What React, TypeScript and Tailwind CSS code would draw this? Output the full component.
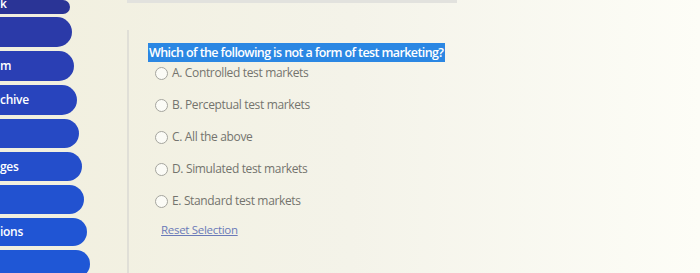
const pills = [
  { label: 'k', w: 'w-[70px]', h: 'h-[14px]', mt: 'mt-0', color: 'bg-[#2a3496]' },
  { label: '', w: 'w-[72px]', h: 'h-[30px]', mt: 'mt-[3px]', color: 'bg-[#2b3aa8]' },
  { label: 'm', w: 'w-[74px]', h: 'h-[30px]', mt: 'mt-[4px]', color: 'bg-[#2a3fb4]' },
  { label: 'chive', w: 'w-[77px]', h: 'h-[30px]', mt: 'mt-[4px]', color: 'bg-[#2844bd]' },
  { label: '', w: 'w-[79px]', h: 'h-[29px]', mt: 'mt-[4px]', color: 'bg-[#2649c4]' },
  { label: 'ges', w: 'w-[82px]', h: 'h-[29px]', mt: 'mt-[4px]', color: 'bg-[#244ecb]' },
  { label: '', w: 'w-[84px]', h: 'h-[29px]', mt: 'mt-[4px]', color: 'bg-[#2252d0]' },
  { label: 'ions', w: 'w-[87px]', h: 'h-[28px]', mt: 'mt-[4px]', color: 'bg-[#2055d4]' },
  { label: '', w: 'w-[90px]', h: 'h-[28px]', mt: 'mt-[4px]', color: 'bg-[#1f57d6]' },
];

const options = [
  'A. Controlled test markets',
  'B. Perceptual test markets',
  'C. All the above',
  'D. Simulated test markets',
  'E. Standard test markets',
];

function Radio() {
  return <span className="w-[13px] h-[13px] rounded-full border border-[#a5a59e] bg-[#fbfbf6] shrink-0" />;
}

export default function App() {
  return (
    <div
      className="w-[700px] h-[273px] overflow-hidden flex bg-gradient-to-r from-[#f1efde] via-[#f4f3e9] to-[#fdfdf7]"
      style={{ fontFamily: '"Open Sans", "Noto Sans", sans-serif' }}
    >
      <div className="w-[127px] shrink-0 flex flex-col">
        {pills.map((p, i) => (
          <div
            key={i}
            className={`${p.w} ${p.h} ${p.mt} ${p.color} rounded-r-full flex items-end pb-[1px] text-white text-[12px] font-semibold tracking-[-0.3px] shrink-0 ${p.label && i > 0 ? '!items-center !pb-0' : ''}`}
          >
            {p.label}
          </div>
        ))}
      </div>
      <div className="flex-1 flex flex-col">
        <div className="w-[330px] h-[3px] bg-[#e2e2de]" />
        <div className="flex-1 mt-[27px] border-l-2 border-[#e0dfd7] pl-[19px] flex flex-col">
          <div className="mt-[13px] self-start bg-[#2b87e3] text-white text-[12.5px] font-semibold tracking-[-0.6px] leading-[19px] pl-[1px] pr-[2px]">
            Which of the following is not a form of test marketing?
          </div>
          <div className="flex flex-col ml-[7px]">
            {options.map((o, i) => (
              <div
                key={o}
                className={`flex items-center gap-[4px] h-[20px] ${i === 0 ? 'mt-[1px]' : 'mt-[12px]'} text-[12px] text-[#74746e] tracking-[-0.35px]`}
              >
                <Radio />
                <span>{o}</span>
              </div>
            ))}
            <div className="mt-[10px] ml-[6px] text-[11.5px] text-[#6a7ab8] underline tracking-[-0.3px]">
              Reset Selection
            </div>
          </div>
        </div>
      </div>
    </div>
  );
}
